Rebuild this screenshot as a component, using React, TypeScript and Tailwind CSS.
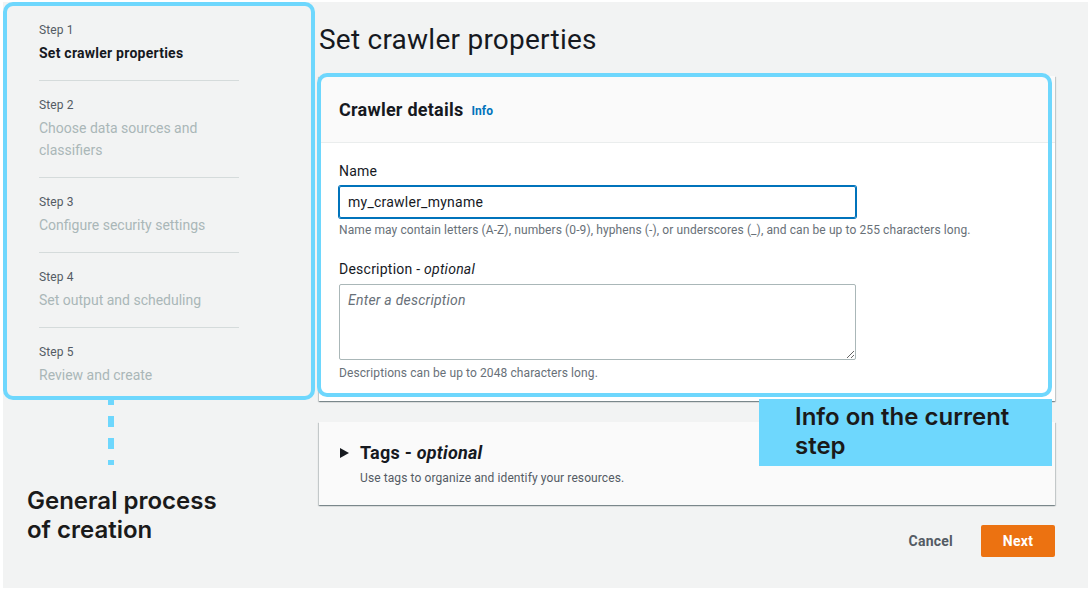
import React from "react";

const steps = [
  { label: "Step 1", title: "Set crawler properties", active: true },
  { label: "Step 2", title: "Choose data sources and classifiers", active: false },
  { label: "Step 3", title: "Configure security settings", active: false },
  { label: "Step 4", title: "Set output and scheduling", active: false },
  { label: "Step 5", title: "Review and create", active: false },
];

const cardShadow =
  "shadow-[0_1px_1px_0_rgba(0,28,36,0.3),1px_1px_1px_0_rgba(0,28,36,0.15),-1px_1px_1px_0_rgba(0,28,36,0.15)]";

function StepNav() {
  return (
    <nav className="w-[312px] h-[398px] rounded-[10px] border-4 border-[#6ed7fd] pl-8 pt-4">
      <ul className="w-[200px]">
        {steps.map((s, i) => (
          <li
            key={s.label}
            className={i < steps.length - 1 ? "pb-4 mb-4 border-b border-[#d5dbdb]" : ""}
          >
            <div className="text-[12px] leading-4 tracking-[0.1px] text-[#545b64]">{s.label}</div>
            <div
              className={
                s.active
                  ? "mt-1 text-[14px] leading-[22px] font-bold text-[#16191f]"
                  : "mt-1 text-[14px] leading-[22px] tracking-normal text-[#aab7b8]"
              }
            >
              {s.title}
            </div>
          </li>
        ))}
      </ul>
    </nav>
  );
}

export default function App() {
  return (
    <div className="w-[1090px] h-[589px] bg-white pt-[2px] pl-[3px] font-['Roboto',sans-serif] tracking-[0.015em]">
      <div className="w-[1085px] h-[586px] bg-[#f2f3f3] flex">
        {/* Left: wizard steps + annotation */}
        <div className="w-[312px] shrink-0 flex flex-col">
          <StepNav />
          <svg width="6" height="65" className="ml-[105px]">
            <line
              x1="3"
              y1="0"
              x2="3"
              y2="65"
              stroke="#6ed7fd"
              strokeWidth="6"
              strokeDasharray="11 11"
              strokeDashoffset="6"
            />
          </svg>
          <p className="ml-[24px] mt-[21px] text-[24px] leading-[29px] font-semibold tracking-normal text-[#1a1a1a] font-['Inter',sans-serif]">
            General process
            <br />
            of creation
          </p>
        </div>

        {/* Main */}
        <div className="relative ml-[4px] w-[736px] pt-[20px]">
          <h1 className="text-[28px] leading-9 text-[#16191f]">Set crawler properties</h1>

          <div className={`relative mt-[18px] bg-white ${cardShadow}`}>
            <div className="h-[67px] bg-[#fafafa] border-b border-[#eaeded] flex items-center px-5">
              <h2 className="text-[18px] font-bold text-[#16191f]">Crawler details</h2>
              <span className="ml-2 mt-[3px] text-[12px] font-bold tracking-[0.1px] text-[#0073bb]">Info</span>
            </div>
            <div className="px-5 pt-[17px] pb-5">
              <label className="block text-[14px] leading-[22px] text-[#16191f]">Name</label>
              <input
                readOnly
                value="my_crawler_myname"
                className="mt-1 w-[517px] h-8 rounded-[2px] border border-[#0073bb] shadow-[0_0_0_1px_#0073bb] px-2 text-[14px] text-[#16191f] outline-none"
              />
              <p className="mt-1 text-[12px] leading-4 tracking-[0.1px] text-[#687078]">
                Name may contain letters (A-Z), numbers (0-9), hyphens (-), or underscores (_), and can be up to 255 characters long.
              </p>
              <label className="block mt-5 text-[14px] leading-[22px] text-[#16191f]">
                Description - <i>optional</i>
              </label>
              <textarea
                placeholder="Enter a description"
                className="block mt-1 w-[517px] h-[76px] rounded-[2px] border border-[#aab7b8] px-2 py-[4px] text-[14px] leading-[22px] placeholder:italic placeholder:text-[#687078] outline-none"
              />
              <p className="mt-[5px] text-[12px] leading-4 tracking-[0.1px] text-[#687078]">
                Descriptions can be up to 2048 characters long.
              </p>
            </div>
            {/* annotation outline */}
            <div className="absolute -left-[2px] -top-[3px] right-[3px] bottom-[4px] rounded-[10px] border-4 border-[#6ed7fd] pointer-events-none" />
          </div>

          <div className={`mt-[21px] h-[83px] bg-[#fafafa] ${cardShadow} pl-[21px] pt-[20px]`}>
            <div className="flex items-center">
              <svg width="9" height="10" viewBox="0 0 9 10" className="mr-[11px]">
                <polygon points="0,0 9,5 0,10" fill="#16191f" />
              </svg>
              <span className="text-[18px] leading-[22px] font-bold text-[#16191f]">
                Tags - <i>optional</i>
              </span>
            </div>
            <p className="ml-5 mt-[6px] text-[12px] leading-4 tracking-[0.1px] text-[#545b64]">
              Use tags to organize and identify your resources.
            </p>
          </div>

          <div className="mt-5 flex justify-end gap-2">
            <button className="h-8 px-5 text-[14px] font-bold text-[#545b64]">Cancel</button>
            <button className="h-8 w-[74px] rounded-[2px] bg-[#ec7211] text-[14px] font-bold text-white">Next</button>
          </div>

          {/* annotation label */}
          <div className="absolute left-[440px] top-[397px] w-[293px] h-[67px] bg-[#6ed7fd] pl-9 pt-[3px] text-[24px] leading-[29px] font-semibold tracking-normal text-[#1a1a1a] font-['Inter',sans-serif]">
            Info on the current
            <br />
            step
          </div>
        </div>
      </div>
    </div>
  );
}
